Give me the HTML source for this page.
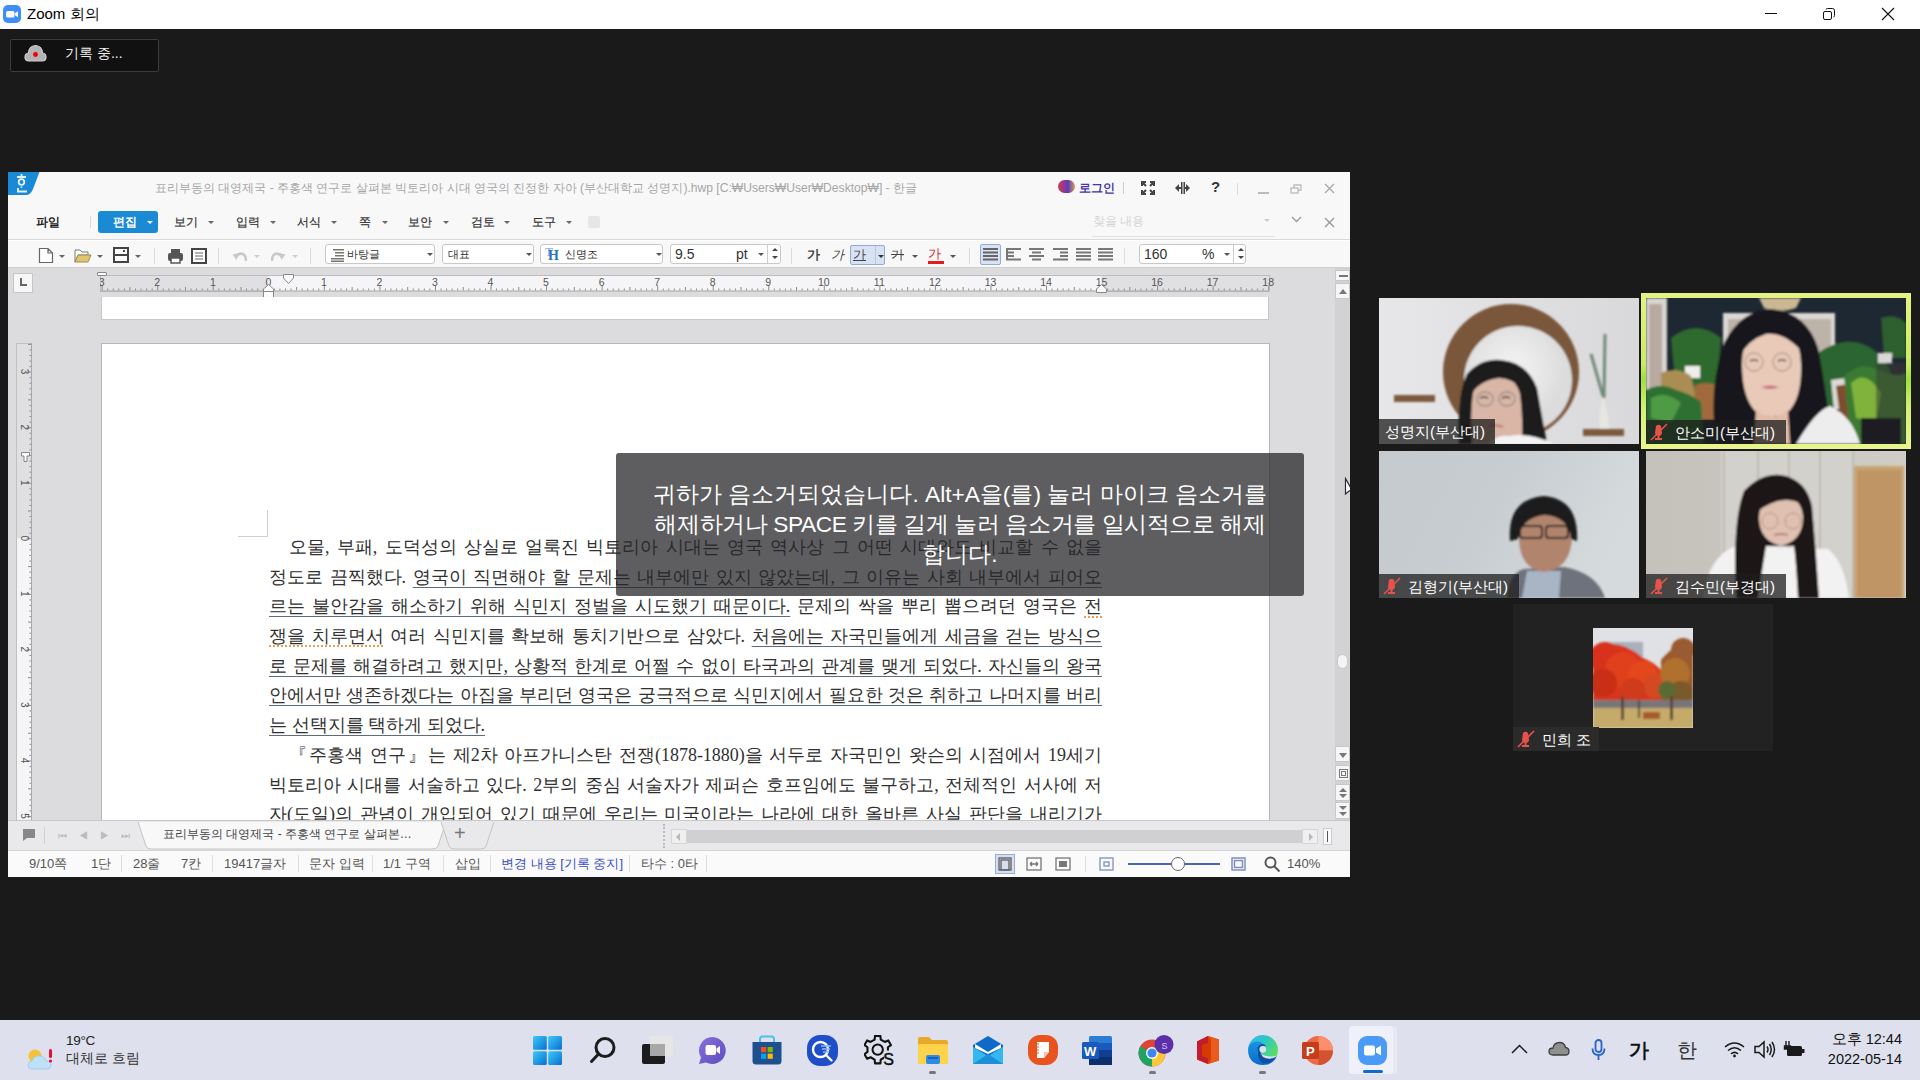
<!DOCTYPE html>
<html><head><meta charset="utf-8">
<style>
*{margin:0;padding:0;box-sizing:border-box}
html,body{width:1920px;height:1080px;overflow:hidden;background:#1a1a1a;font-family:"Liberation Sans",sans-serif}
.a{position:absolute}
#titlebar{left:0;top:0;width:1920px;height:29px;background:#fff}
#badge{left:10px;top:39px;width:149px;height:33px;background:#111;border:1px solid #3c3c3c;border-radius:2px}
#hwp{left:8px;top:172px;width:1342px;height:705px;background:#f8f8f9;overflow:hidden}
#tiles .t{position:absolute;overflow:hidden}
#taskbar{left:0;top:1020px;width:1920px;height:60px;background:#dee0ed}
.lbl{position:absolute;left:0;bottom:0;height:25px;background:rgba(28,28,28,.75);color:#fff;font-size:15px;line-height:25px;padding:0 6px 0 5px;white-space:nowrap}

.mi{top:42px;font-size:11.5px;color:#333;line-height:16px;-webkit-text-stroke:.2px #333}
.menuarr{top:49px;width:0;height:0;border-left:3px solid transparent;border-right:3px solid transparent;border-top:3px solid #666}
.tarr{top:83px;width:0;height:0;border-left:3px solid transparent;border-right:3px solid transparent;border-top:3px solid #666}
.box{top:72px;height:20px;background:#fff;border:1px solid #c8c8c8;border-radius:3px}
.bt{top:0;font-size:11.3px;color:#333;line-height:18px;white-space:nowrap}
.barr{top:8px;width:0;height:0;border-left:3px solid transparent;border-right:3px solid transparent;border-top:3px solid #555}
.fb{top:75px;font-size:13px;color:#444;line-height:16px}
.sbb{left:1327px;width:15px;background:#f6f6f6;border:1px solid #c8c8c8}

.ln{height:29.7px;line-height:29.7px;font-family:"Liberation Serif",serif;font-size:18px;color:#303030;white-space:nowrap;overflow:visible}
.j{text-align:justify;text-align-last:justify}
.ln u{text-decoration:underline;text-decoration-color:#5d6b7c;text-underline-offset:4px;text-decoration-thickness:1px}
.ln i.sp{font-style:normal;text-decoration:underline dotted #e8a050;text-underline-offset:4px}
.st{top:5px;font-size:13px;line-height:17px;white-space:nowrap}
</style></head><body>

<!-- Title bar -->
<div id="titlebar" class="a">
  <svg class="a" style="left:3px;top:5px" width="18" height="18"><rect width="18" height="18" rx="5" fill="#3d8ef6"/><rect x="3" y="6" width="8.5" height="6.5" rx="1.5" fill="#fff"/><path d="M12 8.2L15 6.3V12.2L12 10.3Z" fill="#fff"/></svg>
  <div class="a" style="left:27px;top:5px;font-size:15px;color:#000;line-height:18px">Zoom 회의</div>
  <div class="a" style="left:1765px;top:13px;width:12px;height:1px;background:#111"></div>
  <svg class="a" style="left:1822px;top:7px" width="14" height="14" fill="none" stroke="#111" stroke-width="1"><rect x="1.5" y="4.5" width="8" height="8" rx="1.5"/><path d="M4 2.5Q4 1.5 5.5 1.5H10.5Q12.5 1.5 12.5 3.5V8.5Q12.5 10 11.5 10"/></svg>
  <svg class="a" style="left:1881px;top:7px" width="14" height="14" stroke="#111" stroke-width="1.1"><path d="M1 1L13 13M13 1L1 13"/></svg>

</div>

<div id="badge" class="a">
  <svg class="a" style="left:13px;top:3px" width="24" height="20"><path d="M5 18Q1 18 1 14Q1 10.5 4.5 10Q5 3 11.5 2.5Q18 3 18.5 10Q22 10.5 22 14Q22 18 18 18Z" fill="#b3b3b3" stroke="#d2d2d2" stroke-width="1.2"/><circle cx="11.5" cy="11.5" r="2.4" fill="#e00"/></svg><div class="a" style="left:54px;top:4px;color:#eee;font-size:14px;line-height:18px">기록 중...</div>
</div>

<!-- HWP window -->
<div id="hwp" class="a">
  <!-- title row -->
  <svg class="a" style="left:0;top:0" width="34" height="24"><path d="M0 0H31.5L25 17Q22.5 23 18 23H0Z" fill="#1a8ad6"/><g fill="none" stroke="#e6f2fb" stroke-width="1.8"><path d="M9 5H18M13.5 2V5"/><circle cx="13.5" cy="10" r="2.8"/><path d="M13.5 14.5V15.8M10 16V19.5H19"/></g></svg>
  <div class="a" style="left:147px;top:8px;font-size:12.1px;color:#a6a6a6;white-space:nowrap;line-height:16px">표리부동의 대영제국 - 주홍색 연구로 살펴본 빅토리아 시대 영국의 진정한 자아 (부산대학교 성명지).hwp [C:₩Users₩User₩Desktop₩] - 한글</div>
  <div class="a" style="left:1050px;top:8px;width:17px;height:13px;border-radius:7px;background:linear-gradient(90deg,#d8334f,#5a3fb8 60%,#e59a4c)"></div>
  <div class="a" style="left:1071px;top:8px;font-size:11.7px;color:#4637a8;font-weight:bold;line-height:16px">로그인</div>
  <div class="a" style="left:1115px;top:10px;width:1px;height:12px;background:#ccc"></div>
  <svg class="a" style="left:1133px;top:9px" width="14" height="14" fill="none" stroke="#444" stroke-width="2"><path d="M1 5V1H5M9 1H13V5M13 9V13H9M5 13H1V9M2 2L5 5M12 2L9 5M12 12L9 9M2 12L5 9"/></svg>
  <svg class="a" style="left:1167px;top:9px" width="15" height="14" fill="#444"><rect x="6" y="1" width="1.5" height="12"/><rect x="8.5" y="1" width="1.5" height="12"/><path d="M0 7L4 3V11Z M15 7L11 3V11Z"/><rect x="3" y="6" width="3" height="2"/><rect x="10" y="6" width="3" height="2"/></svg>
  <div class="a" style="left:1203px;top:6px;font-size:15px;font-weight:bold;color:#333;line-height:18px">?</div>
  <div class="a" style="left:1229px;top:11px;width:1px;height:12px;background:#ddd"></div>
  <div class="a" style="left:1250px;top:20px;width:11px;height:2px;background:#bbb"></div>
  <svg class="a" style="left:1282px;top:12px" width="12" height="10" fill="none" stroke="#bbb" stroke-width="1.3"><rect x="1" y="4" width="7" height="5"/><path d="M4 4V1H11V6H8"/></svg>
  <svg class="a" style="left:1316px;top:11px" width="11" height="11" stroke="#aaa" stroke-width="1.4"><path d="M1 1L10 10M10 1L1 10"/></svg>

  <!-- menu row -->
  <div class="a" style="left:28px;top:42px;font-size:11.5px;color:#222;font-weight:bold;line-height:16px">파일</div>
  <div class="a" style="left:82px;top:44px;width:1px;height:12px;background:#d8d8d8"></div>
  <div class="a" style="left:90px;top:39px;width:60px;height:22px;border-radius:3px;background:#1a8ad5"></div>
  <div class="a" style="left:105px;top:42px;font-size:11.5px;color:#fff;font-weight:bold;line-height:16px">편집</div>
  <div class="a menuarr" style="left:139px;top:49px;border-top-color:#fff"></div>
  <div class="a mi" style="left:166px">보기</div><div class="a menuarr" style="left:200px"></div>
  <div class="a mi" style="left:228px">입력</div><div class="a menuarr" style="left:262px"></div>
  <div class="a mi" style="left:289px">서식</div><div class="a menuarr" style="left:323px"></div>
  <div class="a mi" style="left:351px">쪽</div><div class="a menuarr" style="left:374px"></div>
  <div class="a mi" style="left:400px">보안</div><div class="a menuarr" style="left:435px"></div>
  <div class="a mi" style="left:463px">검토</div><div class="a menuarr" style="left:496px"></div>
  <div class="a mi" style="left:524px">도구</div><div class="a menuarr" style="left:558px"></div>
  <div class="a" style="left:580px;top:44px;width:12px;height:12px;background:#e6e6e6;border-radius:2px"></div>
  <div class="a" style="left:1085px;top:41px;font-size:11.6px;color:#d4d4d4;line-height:16px">찾을 내용</div>
  <div class="a" style="left:1084px;top:64px;width:183px;height:1px;background:#e2e2e2"></div>
  <div class="a menuarr" style="left:1256px;top:47px;border-top-color:#ccc"></div>
  <svg class="a" style="left:1283px;top:44px" width="11" height="7" fill="none" stroke="#999" stroke-width="1.3"><path d="M1 1L5.5 5.5L10 1"/></svg>
  <svg class="a" style="left:1316px;top:45px" width="11" height="11" stroke="#999" stroke-width="1.4"><path d="M1 1L10 10M10 1L1 10"/></svg>
  <div class="a" style="left:0;top:67px;width:1342px;height:1px;background:#d9d9d9"></div>
  <div class="a" style="left:0;top:68px;width:1342px;height:1px;background:#fff"></div>

  <!-- toolbar row -->
  <svg class="a" style="left:30px;top:75px" width="16" height="17" fill="#fff" stroke="#666" stroke-width="1.2"><path d="M1.5 1.5H10L14.5 6V15.5H1.5Z M10 1.5V6H14.5"/></svg>
  <div class="a tarr" style="left:51px"></div>
  <svg class="a" style="left:66px;top:76px" width="18" height="15"><path d="M1 2H6L8 4H14V7H4L1 14Z" fill="#fff" stroke="#777" stroke-width="1"/><path d="M4 7H17L14 14H1Z" fill="#e2c46e" stroke="#9c8a55" stroke-width="1"/></svg>
  <div class="a tarr" style="left:89px"></div>
  <svg class="a" style="left:105px;top:75px" width="16" height="16"><rect x="1" y="1" width="14" height="14" fill="#fff" stroke="#444" stroke-width="2"/><rect x="1" y="7" width="14" height="2" fill="#444"/><rect x="10" y="3" width="2" height="2" fill="#444"/></svg>
  <div class="a tarr" style="left:127px"></div>
  <div class="a" style="left:146px;top:76px;width:1px;height:16px;background:#ddd"></div>
  <svg class="a" style="left:159px;top:76px" width="17" height="16"><rect x="4" y="1" width="9" height="4" fill="#555"/><rect x="1" y="5" width="15" height="8" rx="2" fill="#555"/><rect x="4" y="10" width="9" height="5" fill="#fff" stroke="#555" stroke-width="1.5"/></svg>
  <svg class="a" style="left:183px;top:76px" width="16" height="16"><rect x="1" y="1" width="14" height="14" fill="#fff" stroke="#444" stroke-width="2"/><path d="M4 5H12M4 8H12M4 11H12" stroke="#666" stroke-width="1"/></svg>
  <div class="a" style="left:210px;top:76px;width:1px;height:16px;background:#ddd"></div>
  <svg class="a" style="left:224px;top:77px" width="15" height="13"><path d="M4 8Q7 3.5 11 5Q14 6.5 14 12" fill="none" stroke="#c9c9c9" stroke-width="2.6"/><path d="M0.5 5.5L7 4L4.5 11Z" fill="#c9c9c9"/></svg>
  <div class="a tarr" style="left:246px;border-top-color:#ccc"></div>
  <svg class="a" style="left:263px;top:77px" width="15" height="13"><path d="M11 8Q8 3.5 4 5Q1 6.5 1 12" fill="none" stroke="#c9c9c9" stroke-width="2.6"/><path d="M14.5 5.5L8 4L10.5 11Z" fill="#c9c9c9"/></svg>
  <div class="a tarr" style="left:284px;border-top-color:#ccc"></div>
  <div class="a" style="left:302px;top:76px;width:1px;height:16px;background:#ddd"></div>
  <div class="a box" style="left:317px;width:110px">
    <svg class="a" style="left:5px;top:3px" width="13" height="14" fill="#777"><rect x="2" y="1" width="11" height="1.5"/><rect x="4" y="4" width="9" height="1.5"/><rect x="4" y="7" width="9" height="1.5"/><rect x="0" y="10" width="13" height="1.5"/><rect x="0" y="12.5" width="13" height="1.5"/></svg>
    <div class="a bt" style="left:21px">바탕글</div><div class="a barr" style="left:101px"></div>
  </div>
  <div class="a box" style="left:434px;width:92px"><div class="a bt" style="left:5px">대표</div><div class="a barr" style="left:83px"></div></div>
  <div class="a box" style="left:532px;width:123px">
    <div class="a" style="left:4px;top:0px;font-family:'Liberation Serif',serif;font-weight:bold;font-size:12px;color:#8fb7e8;line-height:14px">T</div><div class="a" style="left:7px;top:3px;font-family:'Liberation Serif',serif;font-weight:bold;font-size:14px;color:#2f6fc4;line-height:16px">H</div>
    <div class="a bt" style="left:24px">신명조</div><div class="a barr" style="left:115px"></div>
  </div>
  <div class="a box" style="left:662px;width:111px">
    <div class="a bt" style="left:4px;font-family:'Liberation Sans';font-size:14px">9.5</div>
    <div class="a bt" style="left:65px;font-family:'Liberation Sans';font-size:14px">pt</div>
    <div class="a barr" style="left:87px"></div>
    <div class="a" style="left:96px;top:0;width:1px;height:18px;background:#ccc"></div>
    <div class="a" style="left:101px;top:3px;width:0;height:0;border:3px solid transparent;border-bottom:3px solid #444;border-top:0"></div>
    <div class="a" style="left:101px;top:11px;width:0;height:0;border:3px solid transparent;border-top:3px solid #444;border-bottom:0"></div>
  </div>
  <div class="a" style="left:783px;top:76px;width:1px;height:16px;background:#ddd"></div>
  <div class="a fb" style="left:799px;font-weight:bold">가</div>
  <div class="a fb" style="left:823px;font-style:italic">가</div>
  <div class="a" style="left:842px;top:73px;width:35px;height:20px;background:#d9e2f2;border:1px solid #93a9d9;border-radius:2px"></div>
  <div class="a" style="left:867px;top:74px;width:1px;height:18px;background:#b9c6e4"></div>
  <div class="a fb" style="left:845px;text-decoration:underline">가</div>
  <div class="a barr" style="top:83px;left:870px;border-top-color:#333"></div>
  <div class="a fb" style="left:883px;text-decoration:line-through">가</div>
  <div class="a barr" style="top:83px;left:904px"></div>
  <div class="a fb" style="left:920px;color:#d42020;font-size:13px;top:74px">가</div>
  <div class="a" style="left:920px;top:89px;width:16px;height:3px;background:#e21b1b"></div>
  <div class="a barr" style="top:83px;left:942px"></div>
  <div class="a" style="left:961px;top:76px;width:1px;height:16px;background:#ddd"></div>
  <div class="a" style="left:972px;top:72px;width:21px;height:21px;background:#d9e2f2;border:1px solid #93a9d9;border-radius:2px"></div>
  <svg class="a" style="left:975px;top:76px" width="15" height="13" fill="#666"><rect y="0" width="15" height="2"/><rect y="3.5" width="15" height="2"/><rect y="7" width="15" height="2"/><rect y="10.5" width="15" height="2"/></svg>
  <svg class="a" style="left:998px;top:76px" width="15" height="13" fill="#777"><rect y="0" width="15" height="2"/><rect y="3.5" width="8" height="2"/><rect y="7" width="8" height="2"/><rect y="10.5" width="15" height="2"/><rect y="0" width="2" height="12"/></svg>
  <svg class="a" style="left:1021px;top:76px" width="15" height="13" fill="#777"><rect y="0" width="15" height="2"/><rect x="3" y="3.5" width="9" height="2"/><rect y="7" width="15" height="2"/><rect x="3" y="10.5" width="9" height="2"/></svg>
  <svg class="a" style="left:1045px;top:76px" width="15" height="13" fill="#777"><rect y="0" width="15" height="2"/><rect x="7" y="3.5" width="8" height="2"/><rect x="7" y="7" width="8" height="2"/><rect y="10.5" width="15" height="2"/></svg>
  <svg class="a" style="left:1068px;top:76px" width="15" height="13" fill="#777"><rect y="0" width="15" height="2"/><rect y="3.5" width="15" height="2"/><rect y="7" width="15" height="2"/><rect y="10.5" width="15" height="2"/></svg>
  <svg class="a" style="left:1090px;top:76px" width="15" height="13" fill="#777"><rect y="0" width="15" height="2"/><rect y="3.5" width="15" height="2"/><rect y="7" width="15" height="2"/><rect y="10.5" width="15" height="2"/></svg>
  <div class="a" style="left:1116px;top:76px;width:1px;height:16px;background:#ddd"></div>
  <div class="a box" style="left:1131px;width:107px">
    <div class="a bt" style="left:4px;font-family:'Liberation Sans';font-size:14px">160</div>
    <div class="a bt" style="left:62px;font-family:'Liberation Sans';font-size:14px">%</div>
    <div class="a barr" style="left:84px"></div>
    <div class="a" style="left:93px;top:0;width:1px;height:18px;background:#ccc"></div>
    <div class="a" style="left:98px;top:3px;width:0;height:0;border:3px solid transparent;border-bottom:3px solid #444;border-top:0"></div>
    <div class="a" style="left:98px;top:11px;width:0;height:0;border:3px solid transparent;border-top:3px solid #444;border-bottom:0"></div>
  </div>
  <div class="a" style="left:0;top:95px;width:1342px;height:1px;background:#cfcfcf"></div>

  <!-- doc area -->
  <div class="a" style="left:0;top:96px;width:1342px;height:552px;background:#dcdbde"></div>
  <div class="a" style="left:5px;top:101px;width:20px;height:20px;background:#f7f7f7;border:1px solid #c6c6c6"></div>
  <div class="a" style="left:12px;top:106px;width:2px;height:8px;background:#666"></div>
  <div class="a" style="left:12px;top:112px;width:7px;height:2px;background:#666"></div>
  <svg class="a" style="left:92px;top:103px" width="1180" height="24"><rect x="0.5" y="0.5" width="1169" height="16" fill="#e0dfe2" stroke="#bdbdbd"/><rect x="168.3" y="1" width="833.2" height="15.5" fill="#f5f5f7"/><rect x="1.65" y="10.50" width="1" height="5" fill="#8a8a8a"/><rect x="7.21" y="13.50" width="1" height="2" fill="#8a8a8a"/><rect x="12.76" y="13.50" width="1" height="2" fill="#8a8a8a"/><rect x="18.32" y="13.50" width="1" height="2" fill="#8a8a8a"/><rect x="23.87" y="13.50" width="1" height="2" fill="#8a8a8a"/><rect x="29.43" y="12.00" width="1" height="3.5" fill="#8a8a8a"/><rect x="34.98" y="13.50" width="1" height="2" fill="#8a8a8a"/><rect x="40.54" y="13.50" width="1" height="2" fill="#8a8a8a"/><rect x="46.09" y="13.50" width="1" height="2" fill="#8a8a8a"/><rect x="51.65" y="13.50" width="1" height="2" fill="#8a8a8a"/><rect x="57.20" y="10.50" width="1" height="5" fill="#8a8a8a"/><rect x="62.75" y="13.50" width="1" height="2" fill="#8a8a8a"/><rect x="68.31" y="13.50" width="1" height="2" fill="#8a8a8a"/><rect x="73.87" y="13.50" width="1" height="2" fill="#8a8a8a"/><rect x="79.42" y="13.50" width="1" height="2" fill="#8a8a8a"/><rect x="84.98" y="12.00" width="1" height="3.5" fill="#8a8a8a"/><rect x="90.53" y="13.50" width="1" height="2" fill="#8a8a8a"/><rect x="96.09" y="13.50" width="1" height="2" fill="#8a8a8a"/><rect x="101.64" y="13.50" width="1" height="2" fill="#8a8a8a"/><rect x="107.20" y="13.50" width="1" height="2" fill="#8a8a8a"/><rect x="112.75" y="10.50" width="1" height="5" fill="#8a8a8a"/><rect x="118.31" y="13.50" width="1" height="2" fill="#8a8a8a"/><rect x="123.86" y="13.50" width="1" height="2" fill="#8a8a8a"/><rect x="129.42" y="13.50" width="1" height="2" fill="#8a8a8a"/><rect x="134.97" y="13.50" width="1" height="2" fill="#8a8a8a"/><rect x="140.53" y="12.00" width="1" height="3.5" fill="#8a8a8a"/><rect x="146.08" y="13.50" width="1" height="2" fill="#8a8a8a"/><rect x="151.64" y="13.50" width="1" height="2" fill="#8a8a8a"/><rect x="157.19" y="13.50" width="1" height="2" fill="#8a8a8a"/><rect x="162.75" y="13.50" width="1" height="2" fill="#8a8a8a"/><rect x="168.30" y="10.50" width="1" height="5" fill="#8a8a8a"/><rect x="173.86" y="13.50" width="1" height="2" fill="#8a8a8a"/><rect x="179.41" y="13.50" width="1" height="2" fill="#8a8a8a"/><rect x="184.97" y="13.50" width="1" height="2" fill="#8a8a8a"/><rect x="190.52" y="13.50" width="1" height="2" fill="#8a8a8a"/><rect x="196.07" y="12.00" width="1" height="3.5" fill="#8a8a8a"/><rect x="201.63" y="13.50" width="1" height="2" fill="#8a8a8a"/><rect x="207.19" y="13.50" width="1" height="2" fill="#8a8a8a"/><rect x="212.74" y="13.50" width="1" height="2" fill="#8a8a8a"/><rect x="218.30" y="13.50" width="1" height="2" fill="#8a8a8a"/><rect x="223.85" y="10.50" width="1" height="5" fill="#8a8a8a"/><rect x="229.41" y="13.50" width="1" height="2" fill="#8a8a8a"/><rect x="234.96" y="13.50" width="1" height="2" fill="#8a8a8a"/><rect x="240.51" y="13.50" width="1" height="2" fill="#8a8a8a"/><rect x="246.07" y="13.50" width="1" height="2" fill="#8a8a8a"/><rect x="251.62" y="12.00" width="1" height="3.5" fill="#8a8a8a"/><rect x="257.18" y="13.50" width="1" height="2" fill="#8a8a8a"/><rect x="262.74" y="13.50" width="1" height="2" fill="#8a8a8a"/><rect x="268.29" y="13.50" width="1" height="2" fill="#8a8a8a"/><rect x="273.85" y="13.50" width="1" height="2" fill="#8a8a8a"/><rect x="279.40" y="10.50" width="1" height="5" fill="#8a8a8a"/><rect x="284.96" y="13.50" width="1" height="2" fill="#8a8a8a"/><rect x="290.51" y="13.50" width="1" height="2" fill="#8a8a8a"/><rect x="296.06" y="13.50" width="1" height="2" fill="#8a8a8a"/><rect x="301.62" y="13.50" width="1" height="2" fill="#8a8a8a"/><rect x="307.18" y="12.00" width="1" height="3.5" fill="#8a8a8a"/><rect x="312.73" y="13.50" width="1" height="2" fill="#8a8a8a"/><rect x="318.28" y="13.50" width="1" height="2" fill="#8a8a8a"/><rect x="323.84" y="13.50" width="1" height="2" fill="#8a8a8a"/><rect x="329.39" y="13.50" width="1" height="2" fill="#8a8a8a"/><rect x="334.95" y="10.50" width="1" height="5" fill="#8a8a8a"/><rect x="340.50" y="13.50" width="1" height="2" fill="#8a8a8a"/><rect x="346.06" y="13.50" width="1" height="2" fill="#8a8a8a"/><rect x="351.62" y="13.50" width="1" height="2" fill="#8a8a8a"/><rect x="357.17" y="13.50" width="1" height="2" fill="#8a8a8a"/><rect x="362.73" y="12.00" width="1" height="3.5" fill="#8a8a8a"/><rect x="368.28" y="13.50" width="1" height="2" fill="#8a8a8a"/><rect x="373.84" y="13.50" width="1" height="2" fill="#8a8a8a"/><rect x="379.39" y="13.50" width="1" height="2" fill="#8a8a8a"/><rect x="384.94" y="13.50" width="1" height="2" fill="#8a8a8a"/><rect x="390.50" y="10.50" width="1" height="5" fill="#8a8a8a"/><rect x="396.05" y="13.50" width="1" height="2" fill="#8a8a8a"/><rect x="401.61" y="13.50" width="1" height="2" fill="#8a8a8a"/><rect x="407.17" y="13.50" width="1" height="2" fill="#8a8a8a"/><rect x="412.72" y="13.50" width="1" height="2" fill="#8a8a8a"/><rect x="418.27" y="12.00" width="1" height="3.5" fill="#8a8a8a"/><rect x="423.83" y="13.50" width="1" height="2" fill="#8a8a8a"/><rect x="429.38" y="13.50" width="1" height="2" fill="#8a8a8a"/><rect x="434.94" y="13.50" width="1" height="2" fill="#8a8a8a"/><rect x="440.50" y="13.50" width="1" height="2" fill="#8a8a8a"/><rect x="446.05" y="10.50" width="1" height="5" fill="#8a8a8a"/><rect x="451.61" y="13.50" width="1" height="2" fill="#8a8a8a"/><rect x="457.16" y="13.50" width="1" height="2" fill="#8a8a8a"/><rect x="462.71" y="13.50" width="1" height="2" fill="#8a8a8a"/><rect x="468.27" y="13.50" width="1" height="2" fill="#8a8a8a"/><rect x="473.83" y="12.00" width="1" height="3.5" fill="#8a8a8a"/><rect x="479.38" y="13.50" width="1" height="2" fill="#8a8a8a"/><rect x="484.93" y="13.50" width="1" height="2" fill="#8a8a8a"/><rect x="490.49" y="13.50" width="1" height="2" fill="#8a8a8a"/><rect x="496.05" y="13.50" width="1" height="2" fill="#8a8a8a"/><rect x="501.60" y="10.50" width="1" height="5" fill="#8a8a8a"/><rect x="507.15" y="13.50" width="1" height="2" fill="#8a8a8a"/><rect x="512.71" y="13.50" width="1" height="2" fill="#8a8a8a"/><rect x="518.26" y="13.50" width="1" height="2" fill="#8a8a8a"/><rect x="523.82" y="13.50" width="1" height="2" fill="#8a8a8a"/><rect x="529.38" y="12.00" width="1" height="3.5" fill="#8a8a8a"/><rect x="534.93" y="13.50" width="1" height="2" fill="#8a8a8a"/><rect x="540.49" y="13.50" width="1" height="2" fill="#8a8a8a"/><rect x="546.04" y="13.50" width="1" height="2" fill="#8a8a8a"/><rect x="551.60" y="13.50" width="1" height="2" fill="#8a8a8a"/><rect x="557.15" y="10.50" width="1" height="5" fill="#8a8a8a"/><rect x="562.70" y="13.50" width="1" height="2" fill="#8a8a8a"/><rect x="568.26" y="13.50" width="1" height="2" fill="#8a8a8a"/><rect x="573.82" y="13.50" width="1" height="2" fill="#8a8a8a"/><rect x="579.37" y="13.50" width="1" height="2" fill="#8a8a8a"/><rect x="584.92" y="12.00" width="1" height="3.5" fill="#8a8a8a"/><rect x="590.48" y="13.50" width="1" height="2" fill="#8a8a8a"/><rect x="596.03" y="13.50" width="1" height="2" fill="#8a8a8a"/><rect x="601.59" y="13.50" width="1" height="2" fill="#8a8a8a"/><rect x="607.14" y="13.50" width="1" height="2" fill="#8a8a8a"/><rect x="612.70" y="10.50" width="1" height="5" fill="#8a8a8a"/><rect x="618.26" y="13.50" width="1" height="2" fill="#8a8a8a"/><rect x="623.81" y="13.50" width="1" height="2" fill="#8a8a8a"/><rect x="629.37" y="13.50" width="1" height="2" fill="#8a8a8a"/><rect x="634.92" y="13.50" width="1" height="2" fill="#8a8a8a"/><rect x="640.48" y="12.00" width="1" height="3.5" fill="#8a8a8a"/><rect x="646.03" y="13.50" width="1" height="2" fill="#8a8a8a"/><rect x="651.59" y="13.50" width="1" height="2" fill="#8a8a8a"/><rect x="657.14" y="13.50" width="1" height="2" fill="#8a8a8a"/><rect x="662.69" y="13.50" width="1" height="2" fill="#8a8a8a"/><rect x="668.25" y="10.50" width="1" height="5" fill="#8a8a8a"/><rect x="673.81" y="13.50" width="1" height="2" fill="#8a8a8a"/><rect x="679.36" y="13.50" width="1" height="2" fill="#8a8a8a"/><rect x="684.91" y="13.50" width="1" height="2" fill="#8a8a8a"/><rect x="690.47" y="13.50" width="1" height="2" fill="#8a8a8a"/><rect x="696.03" y="12.00" width="1" height="3.5" fill="#8a8a8a"/><rect x="701.58" y="13.50" width="1" height="2" fill="#8a8a8a"/><rect x="707.13" y="13.50" width="1" height="2" fill="#8a8a8a"/><rect x="712.69" y="13.50" width="1" height="2" fill="#8a8a8a"/><rect x="718.24" y="13.50" width="1" height="2" fill="#8a8a8a"/><rect x="723.80" y="10.50" width="1" height="5" fill="#8a8a8a"/><rect x="729.36" y="13.50" width="1" height="2" fill="#8a8a8a"/><rect x="734.91" y="13.50" width="1" height="2" fill="#8a8a8a"/><rect x="740.46" y="13.50" width="1" height="2" fill="#8a8a8a"/><rect x="746.02" y="13.50" width="1" height="2" fill="#8a8a8a"/><rect x="751.58" y="12.00" width="1" height="3.5" fill="#8a8a8a"/><rect x="757.13" y="13.50" width="1" height="2" fill="#8a8a8a"/><rect x="762.68" y="13.50" width="1" height="2" fill="#8a8a8a"/><rect x="768.24" y="13.50" width="1" height="2" fill="#8a8a8a"/><rect x="773.80" y="13.50" width="1" height="2" fill="#8a8a8a"/><rect x="779.35" y="10.50" width="1" height="5" fill="#8a8a8a"/><rect x="784.90" y="13.50" width="1" height="2" fill="#8a8a8a"/><rect x="790.46" y="13.50" width="1" height="2" fill="#8a8a8a"/><rect x="796.01" y="13.50" width="1" height="2" fill="#8a8a8a"/><rect x="801.57" y="13.50" width="1" height="2" fill="#8a8a8a"/><rect x="807.12" y="12.00" width="1" height="3.5" fill="#8a8a8a"/><rect x="812.68" y="13.50" width="1" height="2" fill="#8a8a8a"/><rect x="818.23" y="13.50" width="1" height="2" fill="#8a8a8a"/><rect x="823.79" y="13.50" width="1" height="2" fill="#8a8a8a"/><rect x="829.35" y="13.50" width="1" height="2" fill="#8a8a8a"/><rect x="834.90" y="10.50" width="1" height="5" fill="#8a8a8a"/><rect x="840.45" y="13.50" width="1" height="2" fill="#8a8a8a"/><rect x="846.01" y="13.50" width="1" height="2" fill="#8a8a8a"/><rect x="851.57" y="13.50" width="1" height="2" fill="#8a8a8a"/><rect x="857.12" y="13.50" width="1" height="2" fill="#8a8a8a"/><rect x="862.67" y="12.00" width="1" height="3.5" fill="#8a8a8a"/><rect x="868.23" y="13.50" width="1" height="2" fill="#8a8a8a"/><rect x="873.78" y="13.50" width="1" height="2" fill="#8a8a8a"/><rect x="879.34" y="13.50" width="1" height="2" fill="#8a8a8a"/><rect x="884.89" y="13.50" width="1" height="2" fill="#8a8a8a"/><rect x="890.45" y="10.50" width="1" height="5" fill="#8a8a8a"/><rect x="896.00" y="13.50" width="1" height="2" fill="#8a8a8a"/><rect x="901.56" y="13.50" width="1" height="2" fill="#8a8a8a"/><rect x="907.12" y="13.50" width="1" height="2" fill="#8a8a8a"/><rect x="912.67" y="13.50" width="1" height="2" fill="#8a8a8a"/><rect x="918.22" y="12.00" width="1" height="3.5" fill="#8a8a8a"/><rect x="923.78" y="13.50" width="1" height="2" fill="#8a8a8a"/><rect x="929.34" y="13.50" width="1" height="2" fill="#8a8a8a"/><rect x="934.89" y="13.50" width="1" height="2" fill="#8a8a8a"/><rect x="940.44" y="13.50" width="1" height="2" fill="#8a8a8a"/><rect x="946.00" y="10.50" width="1" height="5" fill="#8a8a8a"/><rect x="951.55" y="13.50" width="1" height="2" fill="#8a8a8a"/><rect x="957.11" y="13.50" width="1" height="2" fill="#8a8a8a"/><rect x="962.66" y="13.50" width="1" height="2" fill="#8a8a8a"/><rect x="968.22" y="13.50" width="1" height="2" fill="#8a8a8a"/><rect x="973.78" y="12.00" width="1" height="3.5" fill="#8a8a8a"/><rect x="979.33" y="13.50" width="1" height="2" fill="#8a8a8a"/><rect x="984.88" y="13.50" width="1" height="2" fill="#8a8a8a"/><rect x="990.44" y="13.50" width="1" height="2" fill="#8a8a8a"/><rect x="995.99" y="13.50" width="1" height="2" fill="#8a8a8a"/><rect x="1001.55" y="10.50" width="1" height="5" fill="#8a8a8a"/><rect x="1007.11" y="13.50" width="1" height="2" fill="#8a8a8a"/><rect x="1012.66" y="13.50" width="1" height="2" fill="#8a8a8a"/><rect x="1018.21" y="13.50" width="1" height="2" fill="#8a8a8a"/><rect x="1023.77" y="13.50" width="1" height="2" fill="#8a8a8a"/><rect x="1029.33" y="12.00" width="1" height="3.5" fill="#8a8a8a"/><rect x="1034.88" y="13.50" width="1" height="2" fill="#8a8a8a"/><rect x="1040.43" y="13.50" width="1" height="2" fill="#8a8a8a"/><rect x="1045.99" y="13.50" width="1" height="2" fill="#8a8a8a"/><rect x="1051.54" y="13.50" width="1" height="2" fill="#8a8a8a"/><rect x="1057.10" y="10.50" width="1" height="5" fill="#8a8a8a"/><rect x="1062.65" y="13.50" width="1" height="2" fill="#8a8a8a"/><rect x="1068.21" y="13.50" width="1" height="2" fill="#8a8a8a"/><rect x="1073.76" y="13.50" width="1" height="2" fill="#8a8a8a"/><rect x="1079.32" y="13.50" width="1" height="2" fill="#8a8a8a"/><rect x="1084.88" y="12.00" width="1" height="3.5" fill="#8a8a8a"/><rect x="1090.43" y="13.50" width="1" height="2" fill="#8a8a8a"/><rect x="1095.99" y="13.50" width="1" height="2" fill="#8a8a8a"/><rect x="1101.54" y="13.50" width="1" height="2" fill="#8a8a8a"/><rect x="1107.09" y="13.50" width="1" height="2" fill="#8a8a8a"/><rect x="1112.65" y="10.50" width="1" height="5" fill="#8a8a8a"/><rect x="1118.20" y="13.50" width="1" height="2" fill="#8a8a8a"/><rect x="1123.76" y="13.50" width="1" height="2" fill="#8a8a8a"/><rect x="1129.32" y="13.50" width="1" height="2" fill="#8a8a8a"/><rect x="1134.87" y="13.50" width="1" height="2" fill="#8a8a8a"/><rect x="1140.42" y="12.00" width="1" height="3.5" fill="#8a8a8a"/><rect x="1145.98" y="13.50" width="1" height="2" fill="#8a8a8a"/><rect x="1151.54" y="13.50" width="1" height="2" fill="#8a8a8a"/><rect x="1157.09" y="13.50" width="1" height="2" fill="#8a8a8a"/><rect x="1162.64" y="13.50" width="1" height="2" fill="#8a8a8a"/><rect x="1168.20" y="10.50" width="1" height="5" fill="#8a8a8a"/><text x="1.7" y="11" font-size="10.5" text-anchor="middle" fill="#555" font-family="Liberation Sans">3</text><text x="57.2" y="11" font-size="10.5" text-anchor="middle" fill="#555" font-family="Liberation Sans">2</text><text x="112.8" y="11" font-size="10.5" text-anchor="middle" fill="#555" font-family="Liberation Sans">1</text><text x="168.3" y="11" font-size="10.5" text-anchor="middle" fill="#555" font-family="Liberation Sans">0</text><text x="223.9" y="11" font-size="10.5" text-anchor="middle" fill="#555" font-family="Liberation Sans">1</text><text x="279.4" y="11" font-size="10.5" text-anchor="middle" fill="#555" font-family="Liberation Sans">2</text><text x="334.9" y="11" font-size="10.5" text-anchor="middle" fill="#555" font-family="Liberation Sans">3</text><text x="390.5" y="11" font-size="10.5" text-anchor="middle" fill="#555" font-family="Liberation Sans">4</text><text x="446.0" y="11" font-size="10.5" text-anchor="middle" fill="#555" font-family="Liberation Sans">5</text><text x="501.6" y="11" font-size="10.5" text-anchor="middle" fill="#555" font-family="Liberation Sans">6</text><text x="557.1" y="11" font-size="10.5" text-anchor="middle" fill="#555" font-family="Liberation Sans">7</text><text x="612.7" y="11" font-size="10.5" text-anchor="middle" fill="#555" font-family="Liberation Sans">8</text><text x="668.2" y="11" font-size="10.5" text-anchor="middle" fill="#555" font-family="Liberation Sans">9</text><text x="723.8" y="11" font-size="10.5" text-anchor="middle" fill="#555" font-family="Liberation Sans">10</text><text x="779.3" y="11" font-size="10.5" text-anchor="middle" fill="#555" font-family="Liberation Sans">11</text><text x="834.9" y="11" font-size="10.5" text-anchor="middle" fill="#555" font-family="Liberation Sans">12</text><text x="890.5" y="11" font-size="10.5" text-anchor="middle" fill="#555" font-family="Liberation Sans">13</text><text x="946.0" y="11" font-size="10.5" text-anchor="middle" fill="#555" font-family="Liberation Sans">14</text><text x="1001.5" y="11" font-size="10.5" text-anchor="middle" fill="#555" font-family="Liberation Sans">15</text><text x="1057.1" y="11" font-size="10.5" text-anchor="middle" fill="#555" font-family="Liberation Sans">16</text><text x="1112.6" y="11" font-size="10.5" text-anchor="middle" fill="#555" font-family="Liberation Sans">17</text><text x="1168.2" y="11" font-size="10.5" text-anchor="middle" fill="#555" font-family="Liberation Sans">18</text><rect x="0" y="15.5" width="1169" height="1" fill="#a8a8a8"/><rect x="5" y="-3" width="0" height="0"/></svg>
  <div class="a" style="left:89px;top:100px;width:10px;height:4px;background:#fafafa;border:1px solid #888;border-radius:1px"></div>
  <svg class="a" style="left:275px;top:102px" width="11" height="10"><path d="M0.5 0.5H10.5V4L5.5 9.5L0.5 4Z" fill="#fafafa" stroke="#888"/></svg>
  <svg class="a" style="left:255px;top:112px" width="11" height="14"><path d="M0.5 13.5V5L5.5 0.5L10.5 5V13.5Z M0.5 7.5H10.5" fill="#fafafa" stroke="#888"/></svg>
  <svg class="a" style="left:1088px;top:112px" width="11" height="9"><path d="M0.5 8.5V5L5.5 0.5L10.5 5V8.5Z" fill="#fafafa" stroke="#888"/></svg>

  <!-- header strip & page -->
  <div class="a" style="left:93px;top:125px;width:1168px;height:23px;background:#fff;border:1px solid #c8c8c8;border-top:0"></div>
  <div class="a" style="left:93px;top:171px;width:1169px;height:480px;background:#fff;border:1px solid #b8b8b8"></div>
  <!-- vertical ruler -->
  <svg class="a" style="left:8px;top:171px" width="16" height="477"><rect x="0.5" y="0.5" width="15" height="477" fill="#e0dfe2" stroke="#c0c0c0"/><rect x="1" y="195.3" width="14.5" height="477" fill="#f5f5f7"/><rect x="12.0" y="0.87" width="3.5" height="1" fill="#8a8a8a"/><rect x="13.5" y="6.43" width="2" height="1" fill="#8a8a8a"/><rect x="13.5" y="11.98" width="2" height="1" fill="#8a8a8a"/><rect x="13.5" y="17.54" width="2" height="1" fill="#8a8a8a"/><rect x="13.5" y="23.09" width="2" height="1" fill="#8a8a8a"/><rect x="10.5" y="28.65" width="5" height="1" fill="#8a8a8a"/><rect x="13.5" y="34.20" width="2" height="1" fill="#8a8a8a"/><rect x="13.5" y="39.76" width="2" height="1" fill="#8a8a8a"/><rect x="13.5" y="45.31" width="2" height="1" fill="#8a8a8a"/><rect x="13.5" y="50.87" width="2" height="1" fill="#8a8a8a"/><rect x="12.0" y="56.42" width="3.5" height="1" fill="#8a8a8a"/><rect x="13.5" y="61.98" width="2" height="1" fill="#8a8a8a"/><rect x="13.5" y="67.53" width="2" height="1" fill="#8a8a8a"/><rect x="13.5" y="73.09" width="2" height="1" fill="#8a8a8a"/><rect x="13.5" y="78.64" width="2" height="1" fill="#8a8a8a"/><rect x="10.5" y="84.20" width="5" height="1" fill="#8a8a8a"/><rect x="13.5" y="89.75" width="2" height="1" fill="#8a8a8a"/><rect x="13.5" y="95.31" width="2" height="1" fill="#8a8a8a"/><rect x="13.5" y="100.86" width="2" height="1" fill="#8a8a8a"/><rect x="13.5" y="106.42" width="2" height="1" fill="#8a8a8a"/><rect x="12.0" y="111.97" width="3.5" height="1" fill="#8a8a8a"/><rect x="13.5" y="117.53" width="2" height="1" fill="#8a8a8a"/><rect x="13.5" y="123.08" width="2" height="1" fill="#8a8a8a"/><rect x="13.5" y="128.64" width="2" height="1" fill="#8a8a8a"/><rect x="13.5" y="134.19" width="2" height="1" fill="#8a8a8a"/><rect x="10.5" y="139.75" width="5" height="1" fill="#8a8a8a"/><rect x="13.5" y="145.30" width="2" height="1" fill="#8a8a8a"/><rect x="13.5" y="150.86" width="2" height="1" fill="#8a8a8a"/><rect x="13.5" y="156.41" width="2" height="1" fill="#8a8a8a"/><rect x="13.5" y="161.97" width="2" height="1" fill="#8a8a8a"/><rect x="12.0" y="167.52" width="3.5" height="1" fill="#8a8a8a"/><rect x="13.5" y="173.08" width="2" height="1" fill="#8a8a8a"/><rect x="13.5" y="178.63" width="2" height="1" fill="#8a8a8a"/><rect x="13.5" y="184.19" width="2" height="1" fill="#8a8a8a"/><rect x="13.5" y="189.75" width="2" height="1" fill="#8a8a8a"/><rect x="10.5" y="195.30" width="5" height="1" fill="#8a8a8a"/><rect x="13.5" y="200.85" width="2" height="1" fill="#8a8a8a"/><rect x="13.5" y="206.41" width="2" height="1" fill="#8a8a8a"/><rect x="13.5" y="211.96" width="2" height="1" fill="#8a8a8a"/><rect x="13.5" y="217.52" width="2" height="1" fill="#8a8a8a"/><rect x="12.0" y="223.07" width="3.5" height="1" fill="#8a8a8a"/><rect x="13.5" y="228.63" width="2" height="1" fill="#8a8a8a"/><rect x="13.5" y="234.18" width="2" height="1" fill="#8a8a8a"/><rect x="13.5" y="239.74" width="2" height="1" fill="#8a8a8a"/><rect x="13.5" y="245.29" width="2" height="1" fill="#8a8a8a"/><rect x="10.5" y="250.85" width="5" height="1" fill="#8a8a8a"/><rect x="13.5" y="256.40" width="2" height="1" fill="#8a8a8a"/><rect x="13.5" y="261.96" width="2" height="1" fill="#8a8a8a"/><rect x="13.5" y="267.51" width="2" height="1" fill="#8a8a8a"/><rect x="13.5" y="273.07" width="2" height="1" fill="#8a8a8a"/><rect x="12.0" y="278.62" width="3.5" height="1" fill="#8a8a8a"/><rect x="13.5" y="284.18" width="2" height="1" fill="#8a8a8a"/><rect x="13.5" y="289.73" width="2" height="1" fill="#8a8a8a"/><rect x="13.5" y="295.29" width="2" height="1" fill="#8a8a8a"/><rect x="13.5" y="300.84" width="2" height="1" fill="#8a8a8a"/><rect x="10.5" y="306.40" width="5" height="1" fill="#8a8a8a"/><rect x="13.5" y="311.95" width="2" height="1" fill="#8a8a8a"/><rect x="13.5" y="317.51" width="2" height="1" fill="#8a8a8a"/><rect x="13.5" y="323.06" width="2" height="1" fill="#8a8a8a"/><rect x="13.5" y="328.62" width="2" height="1" fill="#8a8a8a"/><rect x="12.0" y="334.17" width="3.5" height="1" fill="#8a8a8a"/><rect x="13.5" y="339.73" width="2" height="1" fill="#8a8a8a"/><rect x="13.5" y="345.28" width="2" height="1" fill="#8a8a8a"/><rect x="13.5" y="350.84" width="2" height="1" fill="#8a8a8a"/><rect x="13.5" y="356.39" width="2" height="1" fill="#8a8a8a"/><rect x="10.5" y="361.95" width="5" height="1" fill="#8a8a8a"/><rect x="13.5" y="367.50" width="2" height="1" fill="#8a8a8a"/><rect x="13.5" y="373.06" width="2" height="1" fill="#8a8a8a"/><rect x="13.5" y="378.62" width="2" height="1" fill="#8a8a8a"/><rect x="13.5" y="384.17" width="2" height="1" fill="#8a8a8a"/><rect x="12.0" y="389.72" width="3.5" height="1" fill="#8a8a8a"/><rect x="13.5" y="395.28" width="2" height="1" fill="#8a8a8a"/><rect x="13.5" y="400.83" width="2" height="1" fill="#8a8a8a"/><rect x="13.5" y="406.39" width="2" height="1" fill="#8a8a8a"/><rect x="13.5" y="411.94" width="2" height="1" fill="#8a8a8a"/><rect x="10.5" y="417.50" width="5" height="1" fill="#8a8a8a"/><rect x="13.5" y="423.05" width="2" height="1" fill="#8a8a8a"/><rect x="13.5" y="428.61" width="2" height="1" fill="#8a8a8a"/><rect x="13.5" y="434.16" width="2" height="1" fill="#8a8a8a"/><rect x="13.5" y="439.72" width="2" height="1" fill="#8a8a8a"/><rect x="12.0" y="445.27" width="3.5" height="1" fill="#8a8a8a"/><rect x="13.5" y="450.83" width="2" height="1" fill="#8a8a8a"/><rect x="13.5" y="456.38" width="2" height="1" fill="#8a8a8a"/><rect x="13.5" y="461.94" width="2" height="1" fill="#8a8a8a"/><rect x="13.5" y="467.49" width="2" height="1" fill="#8a8a8a"/><rect x="10.5" y="473.05" width="5" height="1" fill="#8a8a8a"/><text x="0" y="0" transform="translate(5,28.6) rotate(90)" font-size="10" text-anchor="middle" fill="#555" font-family="Liberation Sans">3</text><text x="0" y="0" transform="translate(5,84.2) rotate(90)" font-size="10" text-anchor="middle" fill="#555" font-family="Liberation Sans">2</text><text x="0" y="0" transform="translate(5,139.7) rotate(90)" font-size="10" text-anchor="middle" fill="#555" font-family="Liberation Sans">1</text><text x="0" y="0" transform="translate(5,195.3) rotate(90)" font-size="10" text-anchor="middle" fill="#555" font-family="Liberation Sans">0</text><text x="0" y="0" transform="translate(5,250.8) rotate(90)" font-size="10" text-anchor="middle" fill="#555" font-family="Liberation Sans">1</text><text x="0" y="0" transform="translate(5,306.4) rotate(90)" font-size="10" text-anchor="middle" fill="#555" font-family="Liberation Sans">2</text><text x="0" y="0" transform="translate(5,361.9) rotate(90)" font-size="10" text-anchor="middle" fill="#555" font-family="Liberation Sans">3</text><text x="0" y="0" transform="translate(5,417.5) rotate(90)" font-size="10" text-anchor="middle" fill="#555" font-family="Liberation Sans">4</text><text x="0" y="0" transform="translate(5,473.0) rotate(90)" font-size="10" text-anchor="middle" fill="#555" font-family="Liberation Sans">5</text><rect x="15" y="0" width="1" height="480" fill="#a8a8a8"/></svg><svg class="a" style="left:13px;top:280px" width="9" height="10"><path d="M0.5 0.5H8.5V4H6V9.5H3V4H0.5Z" fill="#fafafa" stroke="#888"/></svg>
  <!-- corner mark -->
  <div class="a" style="left:230px;top:338px;width:30px;height:27px;border-right:1px solid #cfcfcf;border-bottom:1px solid #cfcfcf"></div>
  <div id="doc" class="a" style="left:261px;top:361px;width:833px">
  <div class="ln j"><span style="padding-left:20px"></span>오물, 부패, 도덕성의 상실로 얼룩진 빅토리아 시대는 영국 역사상 그 어떤 시대와도 비교할 수 없을</div>
  <div class="ln j">정도로 끔찍했다. <u>영국이 직면해야 할 문제는 내부에만 있지 않았는데, 그 이유는 사회 내부에서 피어오</u></div>
  <div class="ln j"><u>르는 불안감을 해소하기 위해 식민지 정벌을 시도했기 때문이다.</u> 문제의 싹을 뿌리 뽑으려던 영국은 <i class="sp">전</i></div>
  <div class="ln j"><i class="sp">쟁을 치루면서</i> 여러 식민지를 확보해 통치기반으로 삼았다. <u>처음에는 자국민들에게 세금을 걷는 방식으</u></div>
  <div class="ln j"><u>로 문제를 해결하려고 했지만, 상황적 한계로 어쩔 수 없이 타국과의 관계를 맺게 되었다. 자신들의 왕국</u></div>
  <div class="ln j"><u>안에서만 생존하겠다는 아집을 부리던 영국은 궁극적으로 식민지에서 필요한 것은 취하고 나머지를 버리</u></div>
  <div class="ln"><u>는 선택지를 택하게 되었다.</u></div>
  <div class="ln j"><span style="padding-left:20px"></span>『주홍색 연구』는 제2차 아프가니스탄 전쟁(1878-1880)을 서두로 자국민인 왓슨의 시점에서 19세기</div>
  <div class="ln j">빅토리아 시대를 서술하고 있다. 2부의 중심 서술자가 제퍼슨 호프임에도 불구하고, 전체적인 서사에 저</div>
  <div class="ln j">자(도일)의 관념이 개입되어 있기 때문에 우리는 미국이라는 나라에 대한 올바른 사실 판단을 내리기가</div>
  </div>
  <!-- v scrollbar -->
  <div class="a" style="left:1327px;top:96px;width:15px;height:552px;background:#d2d2d4"></div>
  <div class="a sbb" style="top:98px;height:11px"><div class="a" style="left:3px;top:4px;width:9px;height:2px;background:#777"></div></div>
  <div class="a sbb" style="top:111px;height:16px"><div class="a" style="left:3px;top:5px;border:4px solid transparent;border-bottom:5px solid #777;border-top:0"></div></div>
  <div class="a" style="left:1329px;top:482px;width:11px;height:15px;border-radius:6px;background:#f4f4f4;border:1px solid #c4c4c4"></div>
  <div class="a sbb" style="top:574px;height:16px"><div class="a" style="left:3px;top:6px;border:4px solid transparent;border-top:5px solid #777;border-bottom:0"></div></div>
  <div class="a sbb" style="top:593px;height:16px"><div class="a" style="left:3px;top:3px;width:9px;height:9px;border:1px solid #777"></div><div class="a" style="left:5px;top:5px;width:5px;height:5px;border:1px solid #777"></div></div>
  <div class="a sbb" style="top:612px;height:17px"><div class="a" style="left:3px;top:3px;border:4px solid transparent;border-bottom:4px solid #777;border-top:0"></div><div class="a" style="left:3px;top:9px;border:4px solid transparent;border-top:4px solid #777;border-bottom:0"></div></div>
  <div class="a sbb" style="top:630px;height:17px"><div class="a" style="left:3px;top:3px;border:4px solid transparent;border-top:4px solid #777;border-bottom:0"></div><div class="a" style="left:3px;top:9px;border:4px solid transparent;border-top:4px solid #777;border-bottom:0"></div></div>

  <!-- tab row -->
  <div class="a" style="left:0;top:648px;width:1342px;height:30px;background:#e9e9eb;border-top:1px solid #c8c8c8"></div>
  <svg class="a" style="left:14px;top:656px" width="14" height="14"><path d="M1 1H13V10H5L1 13Z" fill="#888"/></svg>
  <div class="a" style="left:36px;top:655px;width:1px;height:17px;background:#cfcfcf"></div>
  <div class="a" style="left:50px;top:659px;font-size:10px;color:#bbb;line-height:10px;letter-spacing:12px;white-space:nowrap">⏮◀▶⏭</div>
  <svg class="a" style="left:128px;top:650px" width="360" height="28"><path d="M2 0L10 24Q11 27 15 27H296Q301 27 302 24L310 0" fill="#f8f8f9" stroke="#c4c4c4"/><path d="M305 0L313 24Q314 27 318 27H345Q349 27 350 24L358 0" fill="#e9e9eb" stroke="#c4c4c4"/></svg>
  <div class="a" style="left:155px;top:654px;font-size:12px;color:#444;line-height:16px;white-space:nowrap">표리부동의 대영제국 - 주홍색 연구로 살펴본…</div>
  <div class="a" style="left:446px;top:650px;font-size:20px;color:#777;line-height:22px">+</div>
  <div class="a" style="left:655px;top:652px;width:2px;height:24px;border-left:2px dotted #bbb"></div>
  <div class="a" style="left:663px;top:658px;width:647px;height:13px;background:#d0d0d2"></div>
  <div class="a" style="left:663px;top:657px;width:16px;height:15px;background:#efeff0;border:1px solid #d6d6d6"><div class="a" style="left:4px;top:3px;border:4px solid transparent;border-right:4px solid #b8b8b8;border-left:0"></div></div>
  <div class="a" style="left:1294px;top:657px;width:16px;height:15px;background:#efeff0;border:1px solid #d6d6d6"><div class="a" style="left:6px;top:3px;border:4px solid transparent;border-left:4px solid #b8b8b8;border-right:0"></div></div>
  <div class="a" style="left:1315px;top:656px;width:9px;height:17px;background:#fafafa;border:1px solid #ccc"></div>
  <div class="a" style="left:1319px;top:659px;width:1px;height:11px;background:#555"></div>

  <!-- status bar -->
  <div class="a" style="left:0;top:678px;width:1342px;height:27px;background:#fafafa;border-top:1px solid #d4d4d4"></div>
  <div id="status" class="a" style="left:0;top:678px;height:27px;width:720px"><div class="a st" style="left:21px;color:#555">9/10쪽</div><div class="a st" style="left:83px;color:#555">1단</div><div class="a st" style="left:125px;color:#555">28줄</div><div class="a st" style="left:173px;color:#555">7칸</div><div class="a st" style="left:216px;color:#555">19417글자</div><div class="a st" style="left:301px;color:#555">문자 입력</div><div class="a st" style="left:375px;color:#555">1/1 구역</div><div class="a st" style="left:447px;color:#555">삽입</div><div class="a st" style="left:493px;color:#3a4ec2">변경 내용 [기록 중지]</div><div class="a st" style="left:633px;color:#555">타수 : 0타</div><div class="a" style="left:113px;top:5px;width:1px;height:17px;background:#dedede"></div><div class="a" style="left:204px;top:5px;width:1px;height:17px;background:#dedede"></div><div class="a" style="left:290px;top:5px;width:1px;height:17px;background:#dedede"></div><div class="a" style="left:364px;top:5px;width:1px;height:17px;background:#dedede"></div><div class="a" style="left:435px;top:5px;width:1px;height:17px;background:#dedede"></div><div class="a" style="left:482px;top:5px;width:1px;height:17px;background:#dedede"></div><div class="a" style="left:621px;top:5px;width:1px;height:17px;background:#dedede"></div><div class="a" style="left:698px;top:5px;width:1px;height:17px;background:#dedede"></div></div>
  <div class="a" style="left:987px;top:682px;width:20px;height:20px;background:#d6dff2;border:1px solid #97acd9"></div>
  <svg class="a" style="left:990px;top:685px" width="14" height="14" fill="none" stroke="#666" stroke-width="1.4"><rect x="1" y="1" width="12" height="12"/><rect x="3" y="3" width="8" height="10"/></svg>
  <svg class="a" style="left:1018px;top:685px" width="16" height="14" fill="none" stroke="#777" stroke-width="1.3"><rect x="1" y="1" width="14" height="12"/><path d="M4 7H12M4 7L6 5M4 7L6 9M12 7L10 5M12 7L10 9"/></svg>
  <svg class="a" style="left:1047px;top:685px" width="16" height="14"><rect x="1" y="1" width="14" height="12" fill="none" stroke="#777" stroke-width="1.3"/><rect x="4" y="4" width="8" height="6" fill="#777"/></svg>
  <div class="a" style="left:1077px;top:684px;width:1px;height:16px;background:#ddd"></div>
  <svg class="a" style="left:1091px;top:685px" width="15" height="14" fill="none" stroke="#7f90c0" stroke-width="1.3"><rect x="1" y="1" width="13" height="12"/><rect x="5" y="5" width="5" height="4"/></svg>
  <div class="a" style="left:1120px;top:691px;width:92px;height:2px;background:#4a64b8"></div>
  <div class="a" style="left:1163px;top:685px;width:14px;height:14px;border-radius:7px;background:#fff;border:1.5px solid #666"></div>
  <svg class="a" style="left:1223px;top:685px" width="15" height="14" fill="none" stroke="#7f90c0" stroke-width="1.5"><rect x="1" y="1" width="13" height="12"/><rect x="3.5" y="3.5" width="8" height="7"/></svg>
  <svg class="a" style="left:1256px;top:684px" width="17" height="17" fill="none" stroke="#555" stroke-width="2"><circle cx="6.5" cy="6.5" r="5"/><path d="M10 10L15.5 15.5"/></svg>
  <div class="a" style="left:1279px;top:684px;font-size:13px;color:#555;line-height:16px">140%</div>
</div>


<!-- mute overlay -->
<div class="a" style="left:616px;top:453px;width:688px;height:143px;background:rgba(38,38,40,.74);border-radius:3px"></div>
<div class="a" style="left:616px;top:479px;width:688px;color:#fff;font-size:22.7px;line-height:30px;text-align:center;white-space:nowrap">귀하가 음소거되었습니다. Alt+A을(를) 눌러 마이크 음소거를<br><span style="letter-spacing:-.42px">해제하거나 SPACE 키를 길게 눌러 음소거를 일시적으로 해제</span><br>합니다.</div>
<svg class="a" style="left:1344px;top:477px" width="6" height="19"><path d="M1.5 1.5V17L5 14L8 13Z" fill="#fff" stroke="#2a2a30" stroke-width="1.2"/></svg>

<!-- Video tiles -->
<div id="tiles">
  <!-- tile1 -->
  <div class="t" style="left:1379px;top:298px;width:260px;height:146px">
    <svg width="260" height="146">
      <defs><linearGradient id="w1" x1="0" x2="1"><stop offset="0" stop-color="#e7e7e9"/><stop offset="1" stop-color="#d9d8da"/></linearGradient>
      <radialGradient id="m1" cx=".45" cy=".4"><stop offset="0" stop-color="#f4f4f4"/><stop offset="1" stop-color="#dcdcdc"/></radialGradient>
      <filter id="bl1"><feGaussianBlur stdDeviation="1"/></filter></defs>
      <rect width="260" height="146" fill="url(#w1)"/>
      <g filter="url(#bl1)">
      <circle cx="132" cy="74" r="68" fill="#7a573a"/>
      <circle cx="139" cy="82" r="54" fill="url(#m1)"/>
      <rect x="15" y="97" width="41" height="7" fill="#7d5a3c"/>
      <rect x="204" y="131" width="41" height="7" fill="#7d5a3c"/>
      <path d="M221 130Q219 112 224 99Q229 112 230 130Z" fill="#e8e6e2"/>
      <path d="M225 100L226 36M224 98L212 56" stroke="#6f8a78" stroke-width="3"/>
      <path d="M80 146Q78 95 88 76Q102 60 122 62Q148 64 158 90Q163 118 168 146Z" fill="#1b1a1c"/>
      <path d="M93 146Q91 115 94 95Q100 78 118 76Q136 78 141 96Q144 120 143 146Z" fill="#d9b6a6"/>
      <path d="M92 96Q98 72 120 70Q138 72 146 92Q132 80 120 80Q102 82 92 96Z" fill="#1b1a1c"/>
      <path d="M110 146Q118 136 130 138Q150 134 175 146Z" fill="#f3f3f3"/>
      <path d="M110 128Q118 126 124 129" stroke="#b87a72" stroke-width="2" fill="none"/>
      <ellipse cx="106" cy="101" rx="8" ry="7" fill="none" stroke="#9a8f88" stroke-width="1.3"/><ellipse cx="128" cy="101" rx="8" ry="7" fill="none" stroke="#9a8f88" stroke-width="1.3"/>
      <path d="M101 100Q105 98 109 100M123 100Q127 98 131 100" stroke="#3a2e2a" stroke-width="1.5" fill="none"/>
      </g>
    </svg>
    <div class="lbl" style="width:116px;height:25px;padding-left:6px">성명지(부산대)</div>
  </div>
  <!-- tile2 -->
  <div class="t" style="left:1641px;top:293px;width:270px;height:156px;background:linear-gradient(180deg,#e4f384 0%,#c9ec64 45%,#9fe03c 55%,#d6f07a 75%,#e8f58c 100%)"></div>
  <div class="t" style="left:1646px;top:298px;width:260px;height:146px">
    <svg width="260" height="146">
      <defs><filter id="bl2"><feGaussianBlur stdDeviation="1.2"/></filter></defs>
      <rect width="260" height="146" fill="#1e2833"/>
      <g filter="url(#bl2)">
      <rect x="0" y="0" width="21" height="95" fill="#d9d5d0"/><rect x="3" y="6" width="13" height="85" fill="#b8aaa0"/>
      <rect x="77" y="15" width="112" height="70" fill="#dcd8d3"/><rect x="82" y="21" width="45" height="62" fill="#bdb3a8"/><rect x="153" y="21" width="32" height="62" fill="#bdb3a8"/>
      <path d="M113 0H155L150 10Q134 16 118 10Z" fill="#c9b892"/>
      <path d="M25 40Q50 20 75 40L70 95L30 95Z" fill="#2f6a2f"/>
      <rect x="39" y="68" width="15" height="12" fill="#eeeeec"/>
      <path d="M15 75Q30 68 45 78L50 100L15 100Z" fill="#a98d52"/>
      <path d="M48 88Q60 82 72 88L72 122L50 122Z" fill="#a06a3e"/>
      <path d="M172 55Q200 35 225 50Q240 60 245 75L240 115L182 110Z" fill="#2b6530"/><path d="M235 20Q250 15 260 25V60H238Z" fill="#2f5e2f"/><rect x="232" y="55" width="14" height="10" fill="#d8d8d4"/>
      <path d="M185 82L200 80L200 110L188 112Z" fill="#dcdad6"/>
      <path d="M190 88Q205 84 218 90L215 125L195 125Z" fill="#7d4e2e"/>
      <path d="M198 78Q215 62 232 72Q250 80 260 75V146H205Z" fill="#3a7a30"/><path d="M205 85Q220 70 235 95L230 125L210 120Z" fill="#7fb33a"/>
      <path d="M0 92Q15 84 30 92Q45 96 55 104L58 146H0Z" fill="#2e6f33"/><path d="M5 100Q20 92 35 105L25 125L5 120Z" fill="#4f9a45"/>
      <path d="M230 65V146H260V65Z" fill="#3b3a34" opacity=".5"/><rect x="215" y="120" width="40" height="26" fill="#1e1f22"/>
      <path d="M70 146Q62 90 78 45Q95 12 125 11Q160 14 172 50Q180 90 186 146Z" fill="#19191b"/>
      <path d="M96 66Q96 30 126 28Q154 30 155 66Q156 100 142 114Q126 124 110 114Q96 100 96 66Z" fill="#e9c9b8"/>
      <path d="M110 112Q126 126 142 112L144 146H108Z" fill="#e2bca8"/>
      <path d="M94 58Q100 24 128 24Q150 28 158 56Q140 34 120 36Q102 42 94 58Z" fill="#19191b"/>
      <path d="M150 146Q170 112 184 108Q206 118 214 146Z" fill="#ededee"/>
      <path d="M115 89Q124 86 133 89Q124 93 115 89Z" fill="#c77181"/>
      <circle cx="108" cy="64" r="9" fill="none" stroke="#b0a090" stroke-width="1.3"/><circle cx="136" cy="64" r="9" fill="none" stroke="#b0a090" stroke-width="1.3"/>
      <path d="M104 63Q108 61 112 63M132 63Q136 61 140 63" stroke="#5a4038" stroke-width="1.5" fill="none"/>
      </g>
    </svg>
    <div class="lbl" style="width:140px;height:24px;padding-left:29px"><svg class="a" style="left:4px;top:3px" width="18" height="18"><path d="M6 3Q8.5 0.5 11 3L12 10Q11.5 13 8.5 13Q5.5 13 5 10Z" fill="#e8524d"/><rect x="7.5" y="12.5" width="2" height="2.5" fill="#e8524d"/><rect x="5" y="15" width="7" height="2" fill="#e8524d"/><path d="M1 17L17 1" stroke="#e8524d" stroke-width="1.6"/></svg>안소미(부산대)</div>
  </div>
  <!-- tile3 -->
  <div class="t" style="left:1379px;top:451px;width:260px;height:147px">
    <svg width="260" height="147">
      <defs><linearGradient id="w3" x1="0" y1="0" x2="1" y2="0.3"><stop offset="0" stop-color="#c4cacd"/><stop offset=".5" stop-color="#c7cdd0"/><stop offset="1" stop-color="#d5dadd"/></linearGradient>
      <filter id="bl3"><feGaussianBlur stdDeviation="1.2"/></filter></defs>
      <rect width="260" height="147" fill="url(#w3)"/>
      <g filter="url(#bl3)">
      <path d="M128 147Q130 122 145 118L185 116Q218 122 226 147Z" fill="#6d727b"/>
      <path d="M143 147L148 120L182 120L180 147Z" fill="#a9b4c4"/>
      <path d="M140 85Q140 118 165 121Q192 118 193 85Q193 62 166 60Q140 62 140 85Z" fill="#b1846e"/>
      <path d="M131 90Q128 48 165 45Q200 48 198 90L192 88Q190 66 166 64Q143 66 139 88Z" fill="#1b1a1a"/>
      <rect x="141" y="75" width="22" height="12" rx="3" fill="none" stroke="#2b2220" stroke-width="2"/><rect x="167" y="75" width="22" height="12" rx="3" fill="none" stroke="#2b2220" stroke-width="2"/>
      </g>
    </svg>
    <div class="lbl" style="width:140px;height:24px;padding-left:29px"><svg class="a" style="left:4px;top:3px" width="18" height="18"><path d="M6 3Q8.5 0.5 11 3L12 10Q11.5 13 8.5 13Q5.5 13 5 10Z" fill="#e8524d"/><rect x="7.5" y="12.5" width="2" height="2.5" fill="#e8524d"/><rect x="5" y="15" width="7" height="2" fill="#e8524d"/><path d="M1 17L17 1" stroke="#e8524d" stroke-width="1.6"/></svg>김형기(부산대)</div>
  </div>
  <!-- tile4 -->
  <div class="t" style="left:1646px;top:451px;width:260px;height:147px">
    <svg width="260" height="147">
      <defs><linearGradient id="w4" x1="0" x2="1"><stop offset="0" stop-color="#c4c1ba"/><stop offset="1" stop-color="#d0cdc6"/></linearGradient>
      <filter id="bl4"><feGaussianBlur stdDeviation="1.2"/></filter></defs>
      <rect width="260" height="147" fill="url(#w4)"/>
      <g filter="url(#bl4)">
      <rect x="75" y="0" width="133" height="147" fill="#d3d1cb"/>
      <rect x="77" y="0" width="2" height="147" fill="#bdbab3"/><rect x="111" y="0" width="2" height="147" fill="#bdbab3"/><rect x="142" y="0" width="2" height="147" fill="#bdbab3"/><rect x="173" y="0" width="2" height="147" fill="#bdbab3"/><rect x="206" y="0" width="2" height="147" fill="#bdbab3"/>
      <rect x="208" y="15" width="50" height="132" fill="#c9a473"/><rect x="211" y="19" width="44" height="128" fill="#bf9565"/>
      <path d="M57 147Q62 105 90 95L182 98Q198 110 203 147Z" fill="#f2f2f2"/>
      <path d="M90 147Q86 70 98 40Q115 22 135 24Q160 28 166 55Q170 100 173 147H152Q150 110 148 95L120 95Q116 120 112 147Z" fill="#1d1718"/>
      <path d="M113 68Q113 45 135 44Q157 46 157 68Q156 90 135 95Q114 90 113 68Z" fill="#dfc0b1"/>
      <path d="M112 60Q120 34 138 34Q152 40 160 56Q140 40 112 60Z" fill="#1d1718"/>
      <path d="M128 84Q135 82 142 84" stroke="#b57f77" stroke-width="1.8" fill="none"/>
      <circle cx="124" cy="70" r="8" fill="none" stroke="#b49a8a" stroke-width="1"/><circle cx="147" cy="70" r="8" fill="none" stroke="#b49a8a" stroke-width="1"/>
      </g>
    </svg>
    <div class="lbl" style="width:140px;height:24px;padding-left:29px"><svg class="a" style="left:4px;top:3px" width="18" height="18"><path d="M6 3Q8.5 0.5 11 3L12 10Q11.5 13 8.5 13Q5.5 13 5 10Z" fill="#e8524d"/><rect x="7.5" y="12.5" width="2" height="2.5" fill="#e8524d"/><rect x="5" y="15" width="7" height="2" fill="#e8524d"/><path d="M1 17L17 1" stroke="#e8524d" stroke-width="1.6"/></svg>김수민(부경대)</div>
  </div>
  <!-- tile5 -->
  <div class="t" style="left:1513px;top:604px;width:260px;height:147px;background:#222">
    <svg class="a" style="left:80px;top:24px" width="100" height="100">
      <defs><filter id="bl5"><feGaussianBlur stdDeviation="1.3"/></filter></defs>
      <rect width="100" height="100" fill="#dfe1e4"/>
      <g filter="url(#bl5)">
      <rect x="16" y="14" width="34" height="30" fill="#a9b0bb"/>
      <path d="M0 20Q25 8 50 30Q70 38 75 55L75 75H0Z" fill="#d8361a"/><path d="M68 32Q85 12 100 15V75H68Z" fill="#9a5a2c"/><circle cx="12" cy="30" r="16" fill="#d8321a"/>
      <circle cx="30" cy="42" r="18" fill="#e0401c"/>
      <circle cx="10" cy="55" r="14" fill="#c92e18"/>
      <circle cx="50" cy="48" r="15" fill="#e4471e"/>
      <circle cx="62" cy="58" r="12" fill="#d44a20"/>
      <circle cx="40" cy="62" r="12" fill="#cf3a1c"/>
      <circle cx="90" cy="22" r="12" fill="#9a5a30"/>
      <circle cx="82" cy="45" r="15" fill="#b0702e"/>
      <circle cx="88" cy="65" r="12" fill="#7a5a2a"/>
      <circle cx="74" cy="62" r="9" fill="#5a6a30"/>
      <rect x="0" y="72" width="100" height="8" fill="#7a7678"/>
      <rect x="0" y="80" width="100" height="20" fill="#c4ab6a"/>
      <rect x="50" y="84" width="17" height="7" fill="#a85a2c"/>
      <rect x="28" y="68" width="3" height="24" fill="#5a4436"/><rect x="77" y="68" width="3" height="24" fill="#5a4436"/><rect x="45" y="72" width="2" height="18" fill="#5a4436"/>
      </g>
    </svg>
    <div class="lbl" style="width:86px;height:24px;padding-left:29px;bottom:0px;background:#2b2b2b"><svg class="a" style="left:4px;top:3px" width="18" height="18"><path d="M6 3Q8.5 0.5 11 3L12 10Q11.5 13 8.5 13Q5.5 13 5 10Z" fill="#e8524d"/><rect x="7.5" y="12.5" width="2" height="2.5" fill="#e8524d"/><rect x="5" y="15" width="7" height="2" fill="#e8524d"/><path d="M1 17L17 1" stroke="#e8524d" stroke-width="1.6"/></svg>민희 조</div>
  </div>
</div>

<div id="taskbar" class="a">
  <!-- weather -->
  <svg class="a" style="left:27px;top:28px" width="28" height="24"><circle cx="8" cy="8" r="6.5" fill="#f3c23a"/><path d="M5 21Q1 21 1 17Q1 13 5 13Q7 7 13 8Q18 8 19 13Q24 13 24 17Q24 21 20 21Z" fill="#bfe1f7" stroke="#9cc7e6" stroke-width=".8"/><rect x="22" y="1" width="3" height="9" rx="1.5" fill="#e3102e"/><circle cx="23.5" cy="13" r="1.6" fill="#e3102e"/></svg>
  <div class="a" style="left:66px;top:12px;font-size:13.5px;color:#222;line-height:17px;letter-spacing:-.3px">19°C</div>
  <div class="a" style="left:66px;top:30px;font-size:14px;color:#333;line-height:17px">대체로 흐림</div>
  <!-- start -->
  <svg class="a" style="left:533px;top:16px" width="29" height="29"><defs><linearGradient id="win" x1="0" y1="0" x2="1" y2="1"><stop offset="0" stop-color="#3ccaf8"/><stop offset="1" stop-color="#0a6fd2"/></linearGradient></defs><rect x="0" y="0" width="13.8" height="13.8" rx="1.5" fill="url(#win)"/><rect x="15.2" y="0" width="13.8" height="13.8" rx="1.5" fill="url(#win)"/><rect x="0" y="15.2" width="13.8" height="13.8" rx="1.5" fill="url(#win)"/><rect x="15.2" y="15.2" width="13.8" height="13.8" rx="1.5" fill="url(#win)"/></svg>
  <!-- search -->
  <svg class="a" style="left:589px;top:16px" width="28" height="28" fill="none" stroke="#1c1c1c" stroke-width="3"><circle cx="16" cy="11.5" r="9"/><path d="M9.5 18L2.5 25.5" stroke-linecap="round"/></svg>
  <!-- task view -->
  <svg class="a" style="left:642px;top:16px" width="31" height="29"><rect x="0" y="8" width="23" height="20" rx="2" fill="#1d1d1d"/><rect x="8" y="0" width="23" height="20" rx="2" fill="#e6e6e6" opacity=".92"/><rect x="8" y="8" width="15" height="12" fill="#a8a8a8"/></svg>
  <!-- chat -->
  <svg class="a" style="left:698px;top:16px" width="29" height="29"><defs><linearGradient id="cht" x1="0" y1="0" x2="1" y2="1"><stop offset="0" stop-color="#8a6fd8"/><stop offset="1" stop-color="#5b4fc0"/></linearGradient></defs><path d="M14.5 1A13.5 13.5 0 1 1 8 26.5L1 28L3 21.5A13.5 13.5 0 0 1 14.5 1Z" fill="url(#cht)"/><rect x="7.5" y="9" width="10.5" height="10" rx="2" fill="#fff"/><path d="M18.5 12.5L22 10V18L18.5 15.5Z" fill="#fff"/></svg>
  <!-- store -->
  <svg class="a" style="left:752px;top:15px" width="30" height="30"><path d="M8 7V4Q8 1.5 10.5 1.5H19.5Q22 1.5 22 4V7" fill="none" stroke="#49c2f0" stroke-width="2"/><path d="M0.5 7H29.5V26Q29.5 29.5 26 29.5H4Q0.5 29.5 0.5 26Z" fill="#1e4f8f"/><rect x="9" y="12" width="5.2" height="5.2" fill="#f25022"/><rect x="15.6" y="12" width="5.2" height="5.2" fill="#7fba00"/><rect x="9" y="18.6" width="5.2" height="5.2" fill="#00a4ef"/><rect x="15.6" y="18.6" width="5.2" height="5.2" fill="#ffb900"/></svg>
  <!-- samsung search -->
  <svg class="a" style="left:807px;top:15px" width="31" height="31"><rect x="0" y="0" width="31" height="31" rx="13" fill="#1f4ec9"/><circle cx="13.5" cy="14.5" r="7.5" fill="none" stroke="#fff" stroke-width="2.4"/><path d="M19 20L24.5 25.5" stroke="#fff" stroke-width="2.4" stroke-linecap="round"/><path d="M14 11H24M15 14H23M16 17H22" stroke="#8ab6ff" stroke-width="1.4"/></svg>
  <!-- settings -->
  <svg class="a" style="left:864px;top:15px" width="30" height="31"><path d="M10.63 4.56 L11.03 0.86 L16.37 0.86 L16.77 4.56 L20.86 6.92 L24.27 5.42 L26.94 10.04 L23.93 12.24 L23.93 16.96 L26.94 19.16 L24.27 23.78 L20.86 22.28 L16.77 24.64 L16.37 28.34 L11.03 28.34 L10.63 24.64 L6.54 22.28 L3.13 23.78 L0.46 19.16 L3.47 16.96 L3.47 12.24 L0.46 10.04 L3.13 5.42 L6.54 6.92Z" fill="none" stroke="#111" stroke-width="2.1" stroke-linejoin="round"/><circle cx="13.7" cy="14.6" r="5.2" fill="none" stroke="#111" stroke-width="2"/><rect x="20.2" y="15.5" width="10" height="15.5" fill="#dee0ed"/><text x="19.3" y="30" font-size="16" font-family="Liberation Sans" fill="#111" stroke="#111" stroke-width=".5">S</text></svg>
  <!-- explorer -->
  <svg class="a" style="left:917px;top:16px" width="32" height="28"><path d="M1 3Q1 1 3 1H12L15 4H29Q31 4 31 6V9H1Z" fill="#e8a92a"/><rect x="1" y="8" width="30" height="20" rx="1.5" fill="#fcd34a"/><rect x="9" y="19" width="14" height="9" rx="2" fill="#2c8be6"/><rect x="11" y="21" width="10" height="2" fill="#1d5fb5"/></svg>
  <div class="a" style="left:929px;top:51px;width:7px;height:3px;border-radius:2px;background:#777"></div>
  <!-- mail -->
  <svg class="a" style="left:973px;top:16px" width="30" height="28"><path d="M0 9L15 0L30 9V28H0Z" fill="#0f6ac7"/><path d="M2 8L15 16L28 8L28 12L15 18L2 12Z" fill="#fff"/><path d="M0 11L15 20L30 11V28H0Z" fill="#35b7ef"/><path d="M0 28L15 18L30 28Z" fill="#1d8fd8"/></svg>
  <!-- notes -->
  <svg class="a" style="left:1028px;top:15px" width="30" height="30"><rect x="0" y="0" width="30" height="30" rx="12" fill="#e8531f"/><path d="M9 7H21V17L16 23H9Z" fill="#fff"/><path d="M8 9H11M8 12H11M8 15H11M8 18H11" stroke="#e8531f" stroke-width="1.2"/><path d="M16 23V17H21" fill="#f6c5b0"/></svg>
  <!-- word -->
  <svg class="a" style="left:1082px;top:16px" width="30" height="29"><rect x="7" y="0" width="23" height="29" rx="1.5" fill="#2b7cd3"/><rect x="7" y="7" width="23" height="7" fill="#185abd"/><rect x="7" y="14" width="23" height="8" fill="#103f91"/><rect x="7" y="21" width="23" height="8" fill="#0c2f6e"/><rect x="0" y="6" width="17" height="17" rx="1.5" fill="#185abd"/><text x="2" y="20" font-size="13" font-weight="bold" font-family="Liberation Sans" fill="#fff">W</text></svg>
  <!-- chrome -->
  <svg class="a" style="left:1138px;top:15px" width="38" height="32"><circle cx="14" cy="18" r="13.5" fill="#db4437"/><path d="M14 18L25.7 11.3A13.5 13.5 0 0 1 14 31.5Z" fill="#fcc934"/><path d="M14 18L14 31.5A13.5 13.5 0 0 1 2.3 11.3Z" fill="#1ea362"/><circle cx="14" cy="18" r="6" fill="#fff"/><circle cx="14" cy="18" r="4.6" fill="#3c86f3"/><circle cx="26" cy="9.5" r="9.5" fill="#5a2fa8"/><text x="23.5" y="13.5" font-size="9" font-family="Liberation Sans" fill="#d9c6ff">S</text></svg>
  <div class="a" style="left:1149px;top:51px;width:7px;height:3px;border-radius:2px;background:#777"></div>
  <!-- office -->
  <svg class="a" style="left:1196px;top:15px" width="24" height="30"><path d="M12 1L23 4.5V25.5L12 29L1 24.5V6.5Z" fill="#d83b01"/><path d="M12 1L23 4.5V25.5L12 29L15 25V5Z" fill="#ea5b1c"/><path d="M1 6.5L12 1V8L6 10V21L12 23.5V29L1 24.5Z" fill="#c21d2f"/></svg>
  <!-- edge -->
  <svg class="a" style="left:1248px;top:15px" width="31" height="31"><defs><linearGradient id="edg" x1="0" y1="0" x2="1" y2=".6"><stop offset="0" stop-color="#35b8f2"/><stop offset=".5" stop-color="#2ec7c5"/><stop offset="1" stop-color="#5fe05a"/></linearGradient><linearGradient id="edb" x1="0" y1="0" x2="0" y2="1"><stop offset="0" stop-color="#1b93e3"/><stop offset="1" stop-color="#0a6bcd"/></linearGradient></defs>
  <circle cx="15" cy="15" r="15" fill="url(#edg)"/>
  <path d="M13 19Q19 23 30 20.5V31H13Z" fill="#dee0ed"/>
  <path d="M0.2 16Q0 9 6 7Q13 5 17 11Q12 9 10 13Q8 20 13 24Q19 28 29 21Q25 30 15 30Q1 29.5 0.2 16Z" fill="url(#edb)"/>
  <path d="M9.5 16Q9 10 14 9Q17 9 18.5 11.5Q13.5 10 12.5 14Q11.5 19 15 22Q20 25 27.5 22.5Q24 28 17 28.5Q10 28 9.5 16Z" fill="#0f4f9e"/>
  <circle cx="14.8" cy="14.3" r="3.4" fill="#dee0ed"/>
  </svg>
  <div class="a" style="left:1259px;top:51px;width:7px;height:3px;border-radius:2px;background:#777"></div>
  <!-- powerpoint -->
  <svg class="a" style="left:1302px;top:16px" width="31" height="29"><circle cx="16.5" cy="14.5" r="14.5" fill="#ed6c47"/><path d="M16.5 0A14.5 14.5 0 0 1 31 14.5H16.5Z" fill="#ff8f6b"/><path d="M16.5 14.5H31A14.5 14.5 0 0 1 16.5 29Z" fill="#d35230"/><rect x="0" y="6" width="17" height="17" rx="1.5" fill="#c43e1c"/><text x="4" y="20" font-size="13" font-weight="bold" font-family="Liberation Sans" fill="#fff">P</text></svg>
  <!-- zoom active -->
  <div class="a" style="left:1349px;top:6px;width:44px;height:48px;border-radius:4px;background:#eff0f9;box-shadow:4px 0 0 #e6e8f4"></div>
  <svg class="a" style="left:1358px;top:16px" width="29" height="29"><rect width="29" height="29" rx="9" fill="#4a9af7"/><rect x="6" y="9.5" width="11" height="10" rx="2" fill="#fff"/><path d="M18 12.5L23 9.5V19.5L18 16.5Z" fill="#fff"/></svg>
  <div class="a" style="left:1363px;top:50px;width:20px;height:3px;border-radius:2px;background:#0f6bd0"></div>
  <!-- tray -->
  <svg class="a" style="left:1511px;top:24px" width="17" height="10" fill="none" stroke="#1a1a1a" stroke-width="1.5"><path d="M1 9L8.5 1.5L16 9"/></svg>
  <svg class="a" style="left:1548px;top:21px" width="22" height="15"><path d="M5 14Q1 14 1 10.5Q1 7 5 7Q6 1.5 11.5 1.5Q16.5 1.5 17.5 6.5Q21 7 21 10.5Q21 14 17.5 14Z" fill="#8f8f8f" stroke="#3e3e3e" stroke-width="1.3"/></svg>
  <svg class="a" style="left:1591px;top:19px" width="15" height="22" fill="none" stroke="#2a64c8" stroke-width="1.8"><rect x="4.5" y="1" width="6" height="12" rx="3"/><path d="M1.5 9.5Q1.5 16 7.5 16Q13.5 16 13.5 9.5M7.5 16V21"/></svg>
  <div class="a" style="left:1629px;top:18px;font-size:20px;font-weight:bold;color:#111;line-height:24px">가</div>
  <div class="a" style="left:1677px;top:18px;font-size:20px;color:#333;line-height:24px">한</div>
  <svg class="a" style="left:1724px;top:21px" width="21" height="17" fill="none" stroke="#1a1a1a" stroke-width="1.6"><path d="M1 6Q10.5 -2 20 6M4 9.5Q10.5 4 17 9.5M7 12.8Q10.5 10 14 12.8"/><circle cx="10.5" cy="15" r="1.4" fill="#1a1a1a" stroke="none"/></svg>
  <svg class="a" style="left:1754px;top:20px" width="22" height="19" fill="none" stroke="#1a1a1a" stroke-width="1.5"><path d="M1 6.5H5L10 2V17L5 12.5H1Z"/><path d="M13 6.5Q15 9.5 13 12.5M15.5 4Q19 9.5 15.5 15M18 2Q23 9.5 18 17"/></svg>
  <svg class="a" style="left:1783px;top:21px" width="22" height="17"><rect x="4" y="5" width="15" height="10" rx="1.5" fill="#1a1a1a"/><rect x="19" y="8" width="2.5" height="4" fill="#1a1a1a"/><path d="M3 0V5M6 0V5M1.5 5H7.5V8H1.5Z" stroke="#1a1a1a" stroke-width="1.4" fill="#1a1a1a"/></svg>
  <div class="a" style="left:1822px;top:10px;width:80px;text-align:right;font-size:14.5px;color:#111;line-height:18px">오후 12:44</div>
  <div class="a" style="left:1822px;top:30px;width:80px;text-align:right;font-size:14.5px;color:#111;line-height:18px">2022-05-14</div>
</div>
</body></html>
